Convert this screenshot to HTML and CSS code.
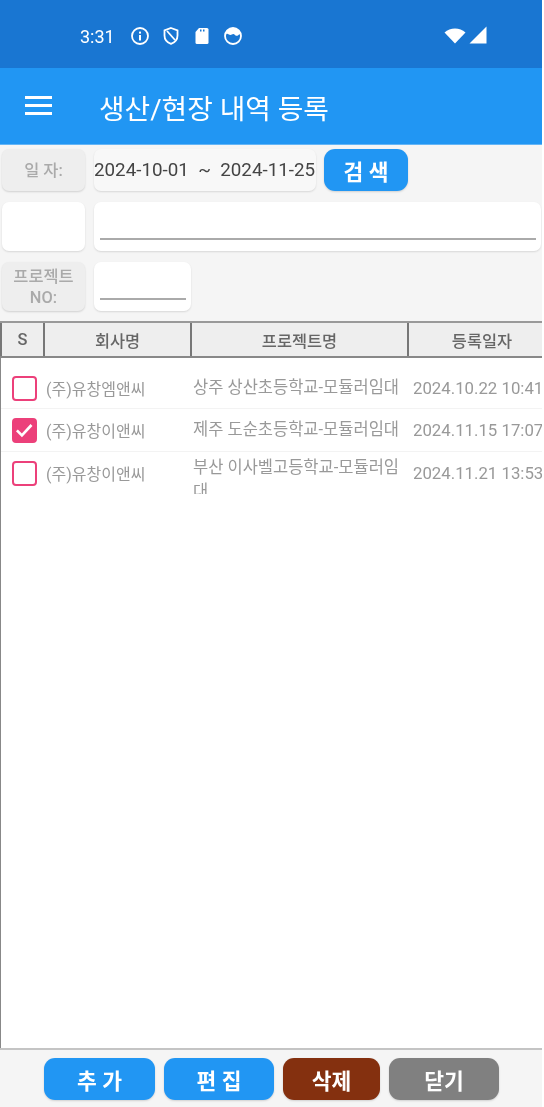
FILE: index.html
```html
<!DOCTYPE html>
<html lang="ko">
<head>
    <meta charset="UTF-8">
    <meta name="viewport" content="width=device-width, initial-scale=1.0">
    <title>생산/현장 내역 등록</title>
    <link rel="stylesheet" href="styles.css">
</head>
<body>
    <div class="screen">
        <div class="status-bar">
            <span class="clock">3:31</span>
            <svg class="status-icon" viewBox="0 0 20 20"><circle cx="10" cy="10" r="8" fill="none" stroke="#fff" stroke-width="1.8"/><rect x="9" y="9" width="2" height="5.5" fill="#fff"/><rect x="9" y="5.6" width="2" height="2" fill="#fff"/></svg>
            <svg class="status-icon" viewBox="0 0 20 20"><path d="M10 2l6.5 2.4v5c0 4-2.7 7-6.500 8.500C6.200 16.400 3.500 13.400 3.500 9.400v-5z" fill="none" stroke="#fff" stroke-width="1.8"/><path d="M6 5l8 9" stroke="#fff" stroke-width="1.8"/></svg>
            <svg class="status-icon" viewBox="0 0 20 20"><path d="M7 2h8a1.500 1.500 0 0 1 1.500 1.500v13A1.500 1.500 0 0 1 15 18H5a1.500 1.500 0 0 1-1.500-1.500V6z" fill="#fff"/><rect x="8" y="3.500" width="1.500" height="2" fill="#1976d2"/><rect x="11" y="3.500" width="1.500" height="2" fill="#1976d2"/></svg>
            <svg class="status-icon" viewBox="0 0 20 20"><circle cx="10" cy="10" r="8" fill="none" stroke="#fff" stroke-width="1.8"/><path d="M3 8c2-1 3 1 4.500 1S10 7 12 9s3 0 5-1v-3l-3-2H6L3 5z" fill="#fff"/></svg>
            <span class="status-right">
                <svg class="wifi" viewBox="0 0 22 16"><path d="M0.500 4.500C3.500 1.800 7 .5 11 .5s7.500 1.300 10.500 4L11 15.500z" fill="#fff"/></svg>
                <svg class="signal" viewBox="0 0 18 18"><path d="M17.500 .5v17H.5z" fill="#fff"/></svg>
            </span>
        </div>

        <div class="app-bar">
            <div class="menu-icon"><span></span><span></span><span></span></div>
            <h1>생산/현장 내역 등록</h1>
        </div>

        <div class="filters">
            <div class="filter-row row-date">
                <div class="label">일 자:</div>
                <div class="box date-range">2024-10-01 &nbsp;~&nbsp; 2024-11-25</div>
                <button class="btn btn-search">검 색</button>
            </div>
            <div class="filter-row row-tall">
                <div class="box box-blank"></div>
                <div class="box box-wide"><div class="underline"></div></div>
            </div>
            <div class="filter-row row-tall">
                <div class="label">프로젝트<br>NO:</div>
                <div class="box box-small"><div class="underline"></div></div>
            </div>
        </div>

        <div class="grid">
            <div class="grid-head">
                <div>S</div>
                <div>회사명</div>
                <div>프로젝트명</div>
                <div>등록일자</div>
            </div>
            <div class="grid-body">
                <div class="grid-row">
                    <div class="cell-check"><span class="check"></span></div>
                    <div class="cell">(주)유창엠앤씨</div>
                    <div class="cell cell-project">상주 상산초등학교-모듈러임대</div>
                    <div class="cell cell-date">2024.10.22 10:41</div>
                </div>
                <div class="grid-row">
                    <div class="cell-check">
                        <span class="check checked"><svg viewBox="0 0 24 24"><path d="M3.500 12.500l6 6L21 6" fill="none" stroke="#fff" stroke-width="3.200"/></svg></span>
                    </div>
                    <div class="cell">(주)유창이앤씨</div>
                    <div class="cell cell-project">제주 도순초등학교-모듈러임대</div>
                    <div class="cell cell-date">2024.11.15 17:07</div>
                </div>
                <div class="grid-row">
                    <div class="cell-check"><span class="check"></span></div>
                    <div class="cell">(주)유창이앤씨</div>
                    <div class="cell cell-project">부산 이사벨고등학교-모듈러임대</div>
                    <div class="cell cell-date">2024.11.21 13:53</div>
                </div>
            </div>
        </div>

        <div class="footer">
            <button class="btn btn-add">추 가</button>
            <button class="btn btn-edit">편 집</button>
            <button class="btn btn-delete">삭제</button>
            <button class="btn btn-close">닫기</button>
        </div>
    </div>
</body>
</html>
```

FILE: styles.css
```css
* {
    box-sizing: border-box;
}
html, body {
    margin: 0;
    background: #fff;
    overflow: hidden;
}
body {
    font-family: Roboto, "Noto Sans CJK KR", sans-serif;
    width: 544px;
    height: 1107px;
}
.screen {
    width: 542px;
    height: 1107px;
    display: flex;
    flex-direction: column;
    background: #f5f5f5;
    overflow: hidden;
    filter: blur(0.6px);
}

/* status bar */
.status-bar {
    height: 68px;
    flex: none;
    background: #1976d2;
    color: #fff;
    display: flex;
    align-items: center;
    padding: 4px 55px 0 80px;
}
.clock {
    font-size: 18px;
    width: 50px;
}
.status-icon {
    width: 20px;
    height: 20px;
    margin-right: 11px;
}
.status-right {
    margin-left: auto;
    display: flex;
    align-items: flex-end;
    gap: 3px;
    margin-top: -3px;
}
.wifi {
    width: 22px;
    height: 16px;
}
.signal {
    width: 18px;
    height: 18px;
}

/* app bar */
.app-bar {
    height: 77px;
    flex: none;
    background: #2196f3;
    display: flex;
    align-items: center;
    padding: 0 0 0 25px;
    border-bottom: 1px solid #64b5f6;
}
.menu-icon {
    width: 27px;
    display: flex;
    flex-direction: column;
    gap: 5px;
    margin-top: -1px;
}
.menu-icon span {
    height: 3px;
    background: #fff;
}
.app-bar h1 {
    margin: 2px 0 0 47px;
    color: #fff;
    font-size: 27.800px;
    font-weight: 400;
}

/* search filters */
.filters {
    height: 176px;
    flex: none;
    padding: 4px 0 0 2px;
    display: flex;
    flex-direction: column;
    gap: 11px;
}
.filter-row {
    display: flex;
    gap: 8px;
}
.row-date {
    height: 42px;
}
.row-tall {
    height: 49px;
}
.label {
    width: 83px;
    margin-right: 1px;
    background: #eee;
    border-radius: 7px;
    box-shadow: 0 1px 2px rgba(0, 0, 0, 0.15);
    color: #aaa;
    font-size: 16.400px;
    font-weight: 500;
    line-height: 21px;
    display: flex;
    align-items: center;
    justify-content: center;
    text-align: center;
}
.box {
    background: #fff;
    border-radius: 7px;
    box-shadow: 0 1px 2px rgba(0, 0, 0, 0.12);
    position: relative;
}
.date-range {
    width: 222px;
    background: #f8f8f8;
    color: #444;
    font-size: 18.800px;
    line-height: 42px;
    white-space: nowrap;
}
.box-blank {
    width: 83px;
    margin-right: 1px;
}
.box-wide {
    width: 447px;
    margin-right: -2px;
}
.box-small {
    width: 97px;
}
.underline {
    position: absolute;
    left: 6px;
    right: 5px;
    bottom: 11px;
    height: 2px;
    background: #aaa;
}

/* buttons */
.btn {
    border: none;
    padding: 0;
    height: 42px;
    border-radius: 11px;
    color: #fff;
    font-family: inherit;
    font-size: 21.500px;
    font-weight: 700;
    box-shadow: 0 1px 2px rgba(0, 0, 0, 0.15);
}
.btn-search {
    width: 84px;
    background: #2196f3;
}
.btn-add {
    width: 111px;
    background: #2196f3;
}
.btn-edit {
    width: 110px;
    background: #2196f3;
}
.btn-delete {
    width: 97px;
    background: #84300f;
}
.btn-close {
    width: 110px;
    background: #808080;
}

/* grid */
.grid {
    flex: 1;
    display: flex;
    flex-direction: column;
    min-height: 0;
    border-bottom: 2px solid #c4c4c4;
}
.grid-head {
    height: 37px;
    flex: none;
    display: grid;
    grid-template-columns: 43px 147px 217px 148px;
    background: #eee;
    border-top: 2px solid #999;
    border-bottom: 2px solid #888;
    color: #666;
    font-size: 16.400px;
    font-weight: 500;
}
.grid-head div {
    display: flex;
    align-items: center;
    justify-content: center;
    border-left: 2px solid #777;
}
.grid-body {
    flex: 1;
    background: #fff;
    border-left: 1px solid #888;
    padding-top: 10px;
}
.grid-row {
    height: 43px;
    display: grid;
    grid-template-columns: 43px 147px 221px 130px;
    grid-template-rows: minmax(0, 1fr);
    border-bottom: 1px solid #f3f3f3;
    color: #999;
    font-size: 16px;
    overflow: hidden;
}
.grid-row:first-child {
    height: 41px;
}
.grid-row:last-child {
    height: 42px;
    border-bottom: none;
}
.cell {
    display: flex;
    align-items: center;
    padding-left: 2px;
    white-space: nowrap;
}
.cell-project {
    white-space: normal;
    word-break: break-all;
    width: 212px;
    font-size: 16.500px;
    line-height: 22px;
}
.grid-row:last-child .cell-project {
    align-items: flex-start;
    line-height: 24px;
    padding-top: 4px;
}
.cell-date {
    padding-left: 1px;
    font-size: 16.800px;
}
.cell-check {
    display: flex;
    align-items: center;
    padding-left: 11px;
}
.check {
    width: 25px;
    height: 25px;
    border: 2.500px solid #ec407a;
    border-radius: 4px;
    background: #fff;
}
.checked {
    background: #ec407a;
}
.checked svg {
    display: block;
    width: 20px;
    height: 20px;
}

/* footer buttons */
.footer {
    height: 57px;
    flex: none;
    display: flex;
    gap: 9px;
    padding: 8px 0 0 44px;
}
```
